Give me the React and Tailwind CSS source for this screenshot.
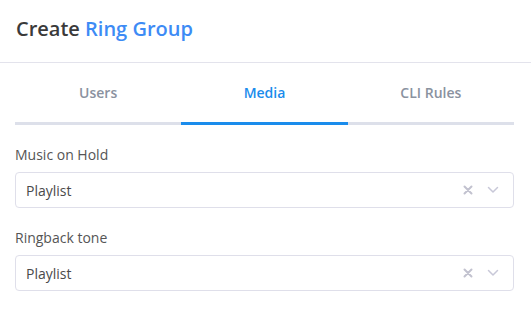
import React from "react";

function Select({ value }) {
  return (
    <div className="flex h-[36px] items-center rounded-[4px] border border-[#dfdfea] bg-white pl-[10px] pr-[14px]">
      <span className="flex-1 text-[14px] text-[#4a4a4a]">{value}</span>
      <svg width="10" height="10" viewBox="0 0 10 10" className="mr-[14px]">
        <path d="M1.5 1.5 L8.5 8.5 M8.5 1.5 L1.5 8.5" stroke="#c2c2cf" strokeWidth="2" strokeLinecap="round" />
      </svg>
      <svg width="12" height="8" viewBox="0 0 12 8">
        <path d="M1.5 1.5 L6 6 L10.5 1.5" stroke="#c8c8d8" strokeWidth="1.5" fill="none" strokeLinecap="round" strokeLinejoin="round" />
      </svg>
    </div>
  );
}

export default function App() {
  const tabs = ["Users", "Media", "CLI Rules"];
  return (
    <div className="h-[320px] w-[531px] bg-white" style={{ fontFamily: '"Open Sans", sans-serif' }}>
      <div className="flex h-[63px] items-center border-b border-[#e3e3ec] px-[16px] pb-[4px]">
        <h1 className="text-[20px] font-semibold text-[#3a3a3a]">
          Create <span className="text-[#3d8bf5]">Ring Group</span>
        </h1>
      </div>
      <div className="px-[15px] pr-[17px]">
        <div className="flex">
          {tabs.map((t) => (
            <div
              key={t}
              className={
                t === "Media"
                  ? "flex h-[62px] flex-1 items-center justify-center border-b-[3px] border-[#1a8cec] text-[14px] font-semibold text-[#1a8cec]"
                  : "flex h-[62px] flex-1 items-center justify-center border-b-[3px] border-[#dde0ea] text-[14px] font-semibold text-[#8a929f]"
              }
            >
              {t}
            </div>
          ))}
        </div>
        <div className="mt-[20px] text-[14px] leading-[20px] text-[#555]">Music on Hold</div>
        <div className="mt-[7px]">
          <Select value="Playlist" />
        </div>
        <div className="mt-[20px] text-[14px] leading-[20px] text-[#555]">Ringback tone</div>
        <div className="mt-[7px]">
          <Select value="Playlist" />
        </div>
      </div>
    </div>
  );
}
